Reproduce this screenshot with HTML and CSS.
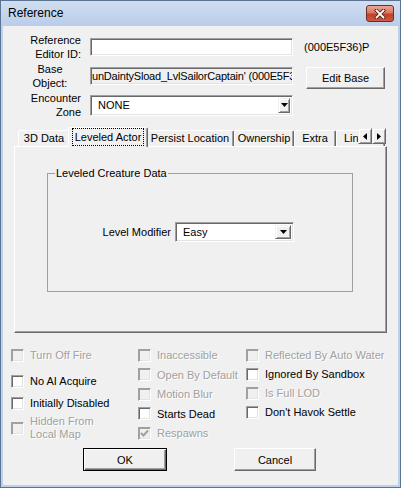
FILE: index.html
```html
<!DOCTYPE html>
<html lang="en">
<head>
    <meta charset="UTF-8">
    <title>Reference</title>
    <link rel="stylesheet" href="styles.css">
</head>
<body>
    <div class="window">
        <div class="titlebar">
            <span class="title">Reference</span>
            <button class="close" aria-label="Close">
                <svg width="12" height="10" viewBox="0 0 12 10">
                    <path d="M2.5 1.5 L9.5 8.5 M9.5 1.5 L2.5 8.5" stroke="#5b2016" stroke-width="3.6" stroke-linecap="square"/>
                    <path d="M2.5 1.5 L9.5 8.5 M9.5 1.5 L2.5 8.5" stroke="#fff" stroke-width="1.8" stroke-linecap="square"/>
                </svg>
            </button>
        </div>

        <div class="client">
            <div class="form">
                <div class="row">
                    <label class="lbl">Reference<br>Editor ID:</label>
                    <div class="field"></div>
                    <span class="formid">(000E5F36)P</span>
                </div>
                <div class="row">
                    <label class="lbl center">Base<br>Object:</label>
                    <div class="field readonly"><span>unDaintySload_LvlSailorCaptain' (000E5F3</span></div>
                    <button class="btn editbase">Edit Base</button>
                </div>
                <div class="row">
                    <label class="lbl">Encounter<br>Zone</label>
                    <div class="combo zone">
                        <span class="value">NONE</span>
                        <span class="drop"><svg width="7" height="4" viewBox="0 0 7 4"><polygon points="0,0 7,0 3.5,4" fill="#000"/></svg></span>
                    </div>
                </div>
            </div>

            <div class="tabs">
                <div class="tabstrip">
                    <div class="tab t1">3D Data</div>
                    <div class="tab active"><span class="focus">Leveled Actor</span></div>
                    <div class="tab t3">Persist Location</div>
                    <div class="tab t4">Ownership</div>
                    <div class="tab t5">Extra</div>
                    <div class="tab t6">Linked Ref</div>
                    <div class="scroller">
                        <span class="arrow"><svg width="4" height="7" viewBox="0 0 4 7"><polygon points="4,0 4,7 0,3.5" fill="#000"/></svg></span>
                        <span class="arrow"><svg width="4" height="7" viewBox="0 0 4 7"><polygon points="0,0 0,7 4,3.5" fill="#000"/></svg></span>
                    </div>
                </div>
                <div class="panel">
                    <fieldset class="group">
                        <legend>Leveled Creature Data</legend>
                        <div class="modrow">
                            <span class="modlbl">Level Modifier</span>
                            <div class="combo level">
                                <span class="value">Easy</span>
                                <span class="drop"><svg width="7" height="4" viewBox="0 0 7 4"><polygon points="0,0 7,0 3.5,4" fill="#000"/></svg></span>
                            </div>
                        </div>
                    </fieldset>
                </div>
            </div>

            <div class="checks">
                <div class="col c1">
                    <div class="check off"><span class="box"></span><span>Turn Off Fire</span></div>
                    <div class="check"><span class="box"></span><span>No AI Acquire</span></div>
                    <div class="check"><span class="box"></span><span>Initially Disabled</span></div>
                    <div class="check off two"><span class="box"></span><span>Hidden From<br>Local Map</span></div>
                </div>
                <div class="col c2">
                    <div class="check off"><span class="box"></span><span>Inaccessible</span></div>
                    <div class="check off"><span class="box"></span><span>Open By Default</span></div>
                    <div class="check off"><span class="box"></span><span>Motion Blur</span></div>
                    <div class="check"><span class="box"></span><span>Starts Dead</span></div>
                    <div class="check off"><span class="box"><svg width="9" height="9" viewBox="0 0 9 9"><polyline points="1,4 3.5,6.5 8,1.5" fill="none" stroke="#a0a0a0" stroke-width="2"/></svg></span><span>Respawns</span></div>
                </div>
                <div class="col c3">
                    <div class="check off"><span class="box"></span><span>Reflected By Auto Water</span></div>
                    <div class="check"><span class="box"></span><span>Ignored By Sandbox</span></div>
                    <div class="check off"><span class="box"></span><span>Is Full LOD</span></div>
                    <div class="check"><span class="box"></span><span>Don't Havok Settle</span></div>
                </div>
            </div>

            <div class="buttons">
                <button class="btn ok">OK</button>
                <button class="btn cancel">Cancel</button>
            </div>
        </div>
    </div>
</body>
</html>
```

FILE: styles.css
```css
* {
    box-sizing: border-box;
    margin: 0;
    padding: 0;
}

body {
    background: #fff;
    font-family: "Liberation Sans", Arial, sans-serif;
    font-size: 11px;
    color: #000;
}

.window {
    width: 401px;
    height: 488px;
    border: 1px solid #5c7391;
    background: #bdd1ea;
    display: flex;
    flex-direction: column;
}

.titlebar {
    height: 25px;
    display: flex;
    align-items: flex-start;
    justify-content: space-between;
    padding-left: 7px;
    background: linear-gradient(#d0def1, #b9cdea);
}

.title {
    font-size: 12px;
    line-height: 25px;
}

.close {
    width: 28px;
    height: 17px;
    margin: 4px 6px 0 0;
    border: 1px solid #6e2d22;
    border-radius: 3px;
    background: linear-gradient(#eaa796, #d8735e 48%, #c23f27 52%, #cc5a40);
    display: flex;
    align-items: center;
    justify-content: center;
}

.client {
    flex: 1;
    margin: 0 2px 2px;
    background: #f0f0f0;
}

/* top fields */
.form {
    padding-top: 7px;
}

.row {
    display: flex;
    align-items: center;
    height: 28px;
}

.row + .row {
    margin-top: 1px;
}

.lbl {
    width: 78px;
    text-align: right;
    line-height: 14px;
}

.lbl.center {
    padding-left: 16px;
    text-align: center;
}

.field,
.combo {
    margin-left: 9px;
    width: 203px;
    height: 18px;
    background: #fff;
    border: 1px solid;
    border-color: #a0a0a0 #fff #fff #a0a0a0;
    box-shadow: inset 1px 1px #696969, inset -1px -1px #e3e3e3;
}

.field.readonly {
    background: #f0f0f0;
    overflow: hidden;
    white-space: nowrap;
    line-height: 16px;
    padding-left: 1px;
    letter-spacing: -0.2px;
}

.formid {
    margin-left: 11px;
}

.btn {
    font: inherit;
    color: #000;
    background: #f0f0f0;
    border: 1px solid;
    border-color: #fff #696969 #696969 #fff;
    box-shadow: inset -1px -1px #a0a0a0;
}

.editbase {
    width: 79px;
    height: 22px;
    margin: 4px 0 0 13px;
}

.combo {
    height: 21px;
    padding: 2px;
    display: flex;
    align-items: center;
    justify-content: space-between;
}

.combo .value {
    padding-left: 5px;
}

.drop,
.arrow {
    align-self: stretch;
    width: 12px;
    background: #f0f0f0;
    border: 1px solid;
    border-color: #f0f0f0 #696969 #696969 #f0f0f0;
    box-shadow: inset 1px 1px #fff, inset -1px -1px #a0a0a0;
    display: flex;
    align-items: center;
    justify-content: center;
}

/* tabs */
.tabs {
    width: 373px;
    margin: 8px 0 0 11px;
}

.tabstrip {
    position: relative;
    display: flex;
    align-items: flex-end;
    height: 19px;
    padding-left: 4px;
}

.tab {
    height: 16px;
    border: 1px solid;
    border-color: #fff #696969 transparent #fff;
    border-bottom: none;
    border-radius: 2px 2px 0 0;
    box-shadow: inset -1px 0 #a0a0a0;
    line-height: 15px;
    text-align: center;
    white-space: nowrap;
    overflow: hidden;
}

.t1 { width: 52px; }
.t3 { width: 88px; }
.t4 { width: 60px; }
.t5 { width: 42px; }
.t6 { width: 49px; text-align: left; padding-left: 7px; }

.tab.active {
    position: relative;
    z-index: 1;
    width: 80px;
    height: 20px;
    margin: 0 -2px -1px;
    padding-top: 1px;
    background: #f0f0f0;
    display: flex;
    justify-content: center;
    align-items: flex-start;
}

.focus {
    outline: 1px dotted #000;
    line-height: 16px;
    padding: 0 2px;
}

.scroller {
    position: absolute;
    right: 1px;
    top: 1px;
    z-index: 2;
    display: flex;
    background: #f0f0f0;
}

.arrow {
    width: 14px;
    height: 16px;
}

.panel {
    height: 187px;
    border: 1px solid;
    border-color: #fff #696969 #696969 #fff;
    box-shadow: inset -1px -1px #a0a0a0;
    padding: 19px 0 0 32px;
}

.group {
    width: 306px;
    height: 126px;
    border: 1px solid #a0a0a0;
}

.group legend {
    margin-left: 7px;
    padding: 0 1px;
    line-height: 14px;
}

.modrow {
    display: flex;
    align-items: center;
    margin-top: 42px;
}

.modlbl {
    width: 76px;
    margin-left: 47px;
    text-align: right;
}

.combo.level {
    width: 119px;
    height: 20px;
    margin-left: 4px;
}

.combo.level .drop {
    width: 16px;
}

/* checkboxes */
.checks {
    display: flex;
    margin-top: 15px;
    padding-left: 8px;
}

.col {
    display: flex;
    flex-direction: column;
}

.c1 { width: 127px; }
.c2 { width: 108px; gap: 5.5px; }
.c3 { gap: 5px; }

.c1 .check:nth-child(2) { margin-top: 12px; }
.c1 .check:nth-child(3) { margin-top: 8px; }
.c1 .check:nth-child(4) { margin-top: 5px; }

.check {
    display: flex;
    align-items: center;
    gap: 6px;
    line-height: 14px;
    white-space: nowrap;
}

.check.two {
    line-height: 13px;
}

.box {
    flex: none;
    width: 13px;
    height: 13px;
    background: #fff;
    border: 1px solid;
    border-color: #a0a0a0 #fff #fff #a0a0a0;
    box-shadow: inset 1px 1px #696969, inset -1px -1px #e3e3e3;
    display: flex;
    align-items: center;
    justify-content: center;
}

.check.off {
    color: #a0a0a0;
    text-shadow: 1px 1px #fff;
}

.check.off .box {
    background: #f0f0f0;
    box-shadow: inset 1px 1px #a0a0a0, inset -1px -1px #e3e3e3;
}

/* dialog buttons */
.buttons {
    display: flex;
    gap: 67px;
    margin: 7px 0 0 80px;
}

.ok {
    width: 84px;
    height: 23px;
    border: 1px solid #000;
    box-shadow: inset 1px 1px #fff, inset -1px -1px #696969, inset -2px -2px #a0a0a0;
}

.cancel {
    width: 82px;
    height: 23px;
}
```
